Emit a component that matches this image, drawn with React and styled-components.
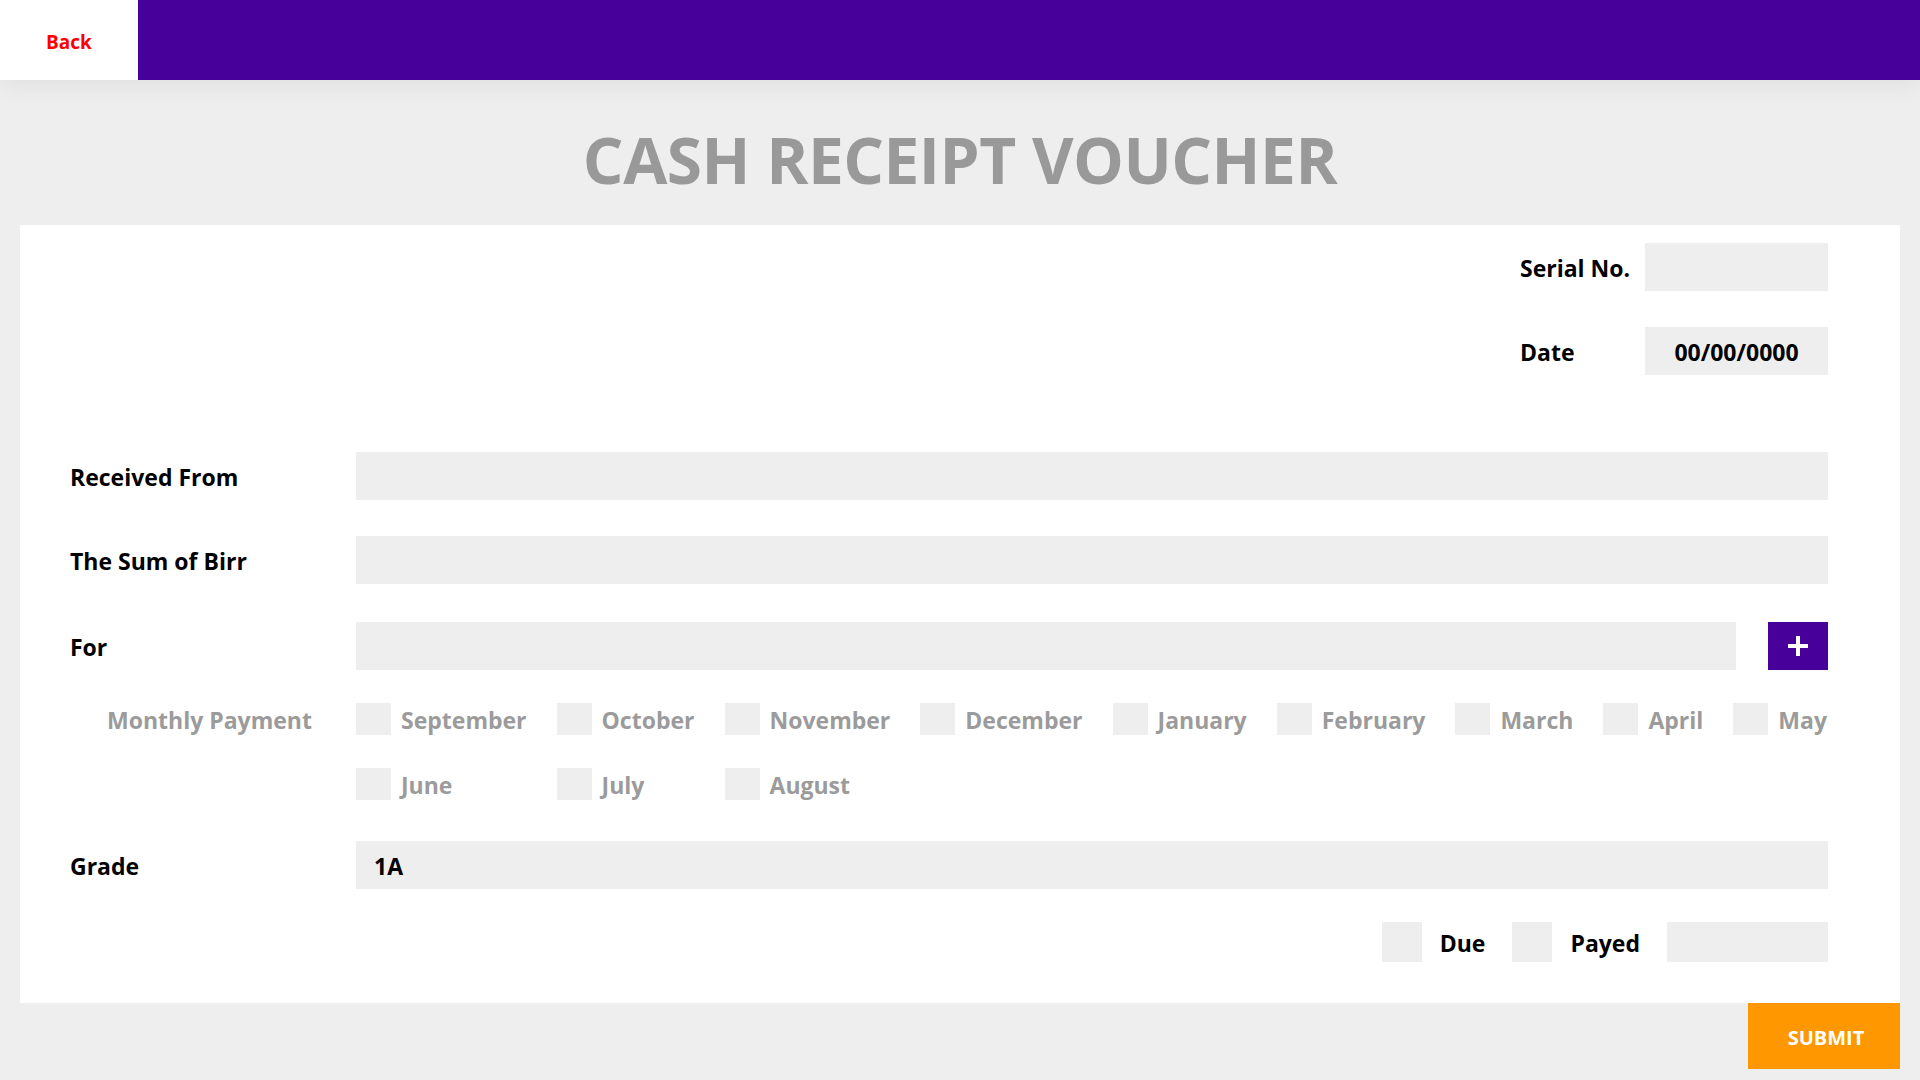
import React from 'react';
import styled, { createGlobalStyle } from 'styled-components';

const MONTHS = [
  'September',
  'October',
  'November',
  'December',
  'January',
  'February',
  'March',
  'April',
  'May',
  'June',
  'July',
  'August',
];

const App = () => {
  return (
    <Page>
      <GlobalStyle />
      <Header>
        <BackButton>Back</BackButton>
      </Header>

      <Title>CASH RECEIPT VOUCHER</Title>

      <Card>
        <MetaGrid>
          <Label>Serial No.</Label>
          <Field />
          <Label>Date</Label>
          <Field center defaultValue="00/00/0000" />
        </MetaGrid>

        <FieldRow first>
          <Label>Received From</Label>
          <Field />
        </FieldRow>
        <FieldRow>
          <Label>The Sum of Birr</Label>
          <Field />
        </FieldRow>
        <FieldRow spaced>
          <Label>For</Label>
          <InputWithButton>
            <Field />
            <AddButton type="button">
              <svg width="20" height="20" viewBox="0 0 20 20">
                <rect x="8" y="0" width="4" height="20" fill="#fff" />
                <rect x="0" y="8" width="20" height="4" fill="#fff" />
              </svg>
            </AddButton>
          </InputWithButton>
        </FieldRow>

        <MonthRow>
          <MutedLabel>Monthly Payment</MutedLabel>
          <MonthGrid>
            {MONTHS.map((m) => (
              <MonthItem key={m}>
                <Check type="checkbox" />
                <MonthName>{m}</MonthName>
              </MonthItem>
            ))}
          </MonthGrid>
        </MonthRow>

        <FieldRow grade>
          <Label>Grade</Label>
          <Field defaultValue="1A" />
        </FieldRow>

        <StatusRow>
          <BigCheck type="checkbox" />
          <StatusLabel>Due</StatusLabel>
          <BigCheck type="checkbox" />
          <StatusLabel>Payed</StatusLabel>
          <SmallField />
        </StatusRow>
      </Card>

      <Footer>
        <SubmitButton type="button">SUBMIT</SubmitButton>
      </Footer>
    </Page>
  );
};

const GlobalStyle = createGlobalStyle`
  * { box-sizing: border-box; }
  body {
    margin: 0;
    background: #eeeeee;
    font-family: "Open Sans", "Noto Sans", sans-serif;
  }
`;

const Page = styled.div`
  min-height: 100vh;
  display: flex;
  flex-direction: column;
  background: #eeeeee;
`;

const Header = styled.div`
  height: 80px;
  display: flex;
  background: #48009a;
  box-shadow: 0 6px 26px rgba(0, 0, 0, 0.06);
`;

const BackButton = styled.button`
  width: 138px;
  height: 100%;
  padding: 4px 0 0;
  border: none;
  background: #ffffff;
  color: #ff0000;
  font-family: inherit;
  font-size: 19px;
  font-weight: 700;
  cursor: pointer;
`;

const Title = styled.h1`
  margin: 48px 0 33px;
  text-align: center;
  font-size: 64px;
  line-height: 64px;
  letter-spacing: -0.5px;
  font-weight: 700;
  color: #999999;
`;

const Card = styled.div`
  margin: 0 20px;
  padding: 18px 72px 41px 50px;
  display: flex;
  flex-direction: column;
  background: #ffffff;
`;

const MetaGrid = styled.div`
  align-self: flex-end;
  display: grid;
  grid-template-columns: 125px 183px;
  row-gap: 36px;
  align-items: center;
`;

const Label = styled.label`
  padding-top: 2px;
  font-size: 23px;
  font-weight: 700;
  color: #000000;
  line-height: 46px;
`;

const Field = styled.input`
  width: 100%;
  height: 48px;
  border: none;
  outline: none;
  background: #eeeeee;
  padding: 2px 18px 0;
  font-family: inherit;
  font-size: 23px;
  font-weight: 700;
  color: #000000;
  text-align: ${(p) => (p.center ? 'center' : 'left')};
`;

const FieldRow = styled.div`
  display: grid;
  grid-template-columns: 286px 1fr;
  align-items: center;
  margin-top: ${(p) => (p.first ? '77px' : p.spaced ? '38px' : p.grade ? '41px' : '36px')};
`;

const InputWithButton = styled.div`
  display: flex;
  gap: 32px;
`;

const AddButton = styled.button`
  flex: 0 0 60px;
  height: 48px;
  border: none;
  background: #48009a;
  display: flex;
  align-items: center;
  justify-content: center;
  cursor: pointer;
`;

const MonthRow = styled.div`
  display: grid;
  grid-template-columns: 286px 1fr;
  align-items: start;
  margin-top: 33px;
`;

const MutedLabel = styled.span`
  padding: 2px 0 0 37px;
  font-size: 23px;
  font-weight: 700;
  line-height: 30px;
  color: #9b9b9b;
`;

const MonthGrid = styled.div`
  display: grid;
  grid-template-columns: repeat(9, auto);
  justify-content: start;
  column-gap: 30px;
  row-gap: 33px;
`;

const MonthItem = styled.label`
  display: flex;
  align-items: center;
  gap: 10px;
`;

const Check = styled.input`
  appearance: none;
  margin: 0;
  width: 35px;
  height: 32px;
  background: #eeeeee;
  border: none;
  cursor: pointer;
`;

const MonthName = styled.span`
  padding-top: 2px;
  font-size: 23px;
  font-weight: 700;
  line-height: 30px;
  color: #9b9b9b;
  white-space: nowrap;
`;

const StatusRow = styled.div`
  align-self: flex-end;
  margin-top: 33px;
  display: flex;
  align-items: center;
`;

const BigCheck = styled(Check)`
  width: 40px;
  height: 40px;
  margin-right: 18px;
`;

const StatusLabel = styled.span`
  margin-right: 27px;
  padding-top: 2px;
  font-size: 23px;
  line-height: 32px;
  font-weight: 700;
  color: #000000;
`;

const SmallField = styled(Field)`
  width: 161px;
  height: 40px;
`;

const Footer = styled.div`
  display: flex;
  justify-content: flex-end;
  padding-right: 20px;
`;

const SubmitButton = styled.button`
  width: 152px;
  height: 66px;
  padding: 2px 0 0 4px;
  border: none;
  background: #ff9800;
  color: #ffffff;
  font-family: inherit;
  font-size: 20px;
  font-weight: 700;
  cursor: pointer;
`;

export default App;
